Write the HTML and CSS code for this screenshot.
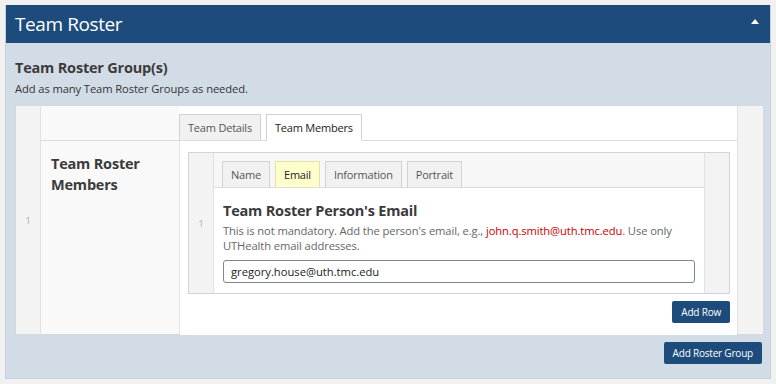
FILE: index.html
```html
<!DOCTYPE html>
<html lang="en">

<head>
    <meta charset="UTF-8">
    <meta name="viewport" content="width=device-width, initial-scale=1.0">
    <title>Team Roster</title>
    <link rel="stylesheet" href="styles.css">
</head>

<body>
    <div class="panel">
        <div class="panel-header">
            <h2>Team Roster</h2>
            <span class="toggle"></span>
        </div>
        <div class="panel-body">
            <h3 class="field-title">Team Roster Group(s)</h3>
            <p class="field-desc">Add as many Team Roster Groups as needed.</p>

            <div class="repeater">
                <div class="row-num">1</div>
                <div class="row-main">
                    <div class="cell-head"></div>
                    <div class="tabs outer-tabs">
                        <span class="tab">Team Details</span>
                        <span class="tab active">Team Members</span>
                    </div>
                    <div class="cell-label">Team Roster Members</div>
                    <div class="cell-content">
                        <div class="inner-repeater">
                            <div class="row-num inner-num">1</div>
                            <div class="inner-main">
                                <div class="tabs inner-tabs">
                                    <span class="tab">Name</span>
                                    <span class="tab highlight">Email</span>
                                    <span class="tab">Information</span>
                                    <span class="tab">Portrait</span>
                                </div>
                                <div class="inner-field">
                                    <h3 class="field-title">Team Roster Person's Email</h3>
                                    <p class="field-desc">This is not mandatory. Add the person's email, e.g., <span class="example">john.q.smith@uth.tmc.edu</span>. Use only UTHealth email addresses.</p>
                                    <input class="text-input" type="text" value="gregory.house@uth.tmc.edu">
                                </div>
                            </div>
                            <div class="row-end inner-end"></div>
                        </div>
                        <div class="actions">
                            <button class="btn">Add Row</button>
                        </div>
                    </div>
                </div>
                <div class="row-end"></div>
            </div>

            <div class="actions group-actions">
                <button class="btn">Add Roster Group</button>
            </div>
        </div>
    </div>
</body>

</html>
```

FILE: styles.css
```css
body {
    font-family: "Open Sans", "Noto Sans", sans-serif;
    margin: 0;
    padding: 5px;
    background-color: #f1f1f1;
    color: #333;
}

.panel {
    border: 1px solid #c8d1da;
    border-top: none;
}

.panel-header {
    height: 38px;
    background-color: #1d4c7c;
    display: flex;
    justify-content: space-between;
    align-items: center;
    padding: 0 11px 0 9px;
}

.panel-header h2 {
    margin: 0;
    color: white;
    font-size: 19px;
    font-weight: 400;
    letter-spacing: -0.4px;
}

.toggle {
    width: 0;
    height: 0;
    border-left: 4px solid transparent;
    border-right: 4px solid transparent;
    border-bottom: 5px solid white;
    margin-bottom: 6px;
}

.panel-body {
    background-color: #d2dce6;
    padding: 15px 6px 14px 9px;
}

.field-title {
    margin: 0;
    font-size: 14.5px;
    font-weight: 700;
    color: #3b3b3b;
    letter-spacing: -0.2px;
}

.field-desc {
    margin: 4px 0 0;
    font-size: 11.2px;
    line-height: 15px;
    color: #333;
    letter-spacing: -0.1px;
}

.repeater {
    display: flex;
    margin-top: 9px;
    height: 230px;
    box-sizing: border-box;
    border: 1px solid #d4d9de;
    background-color: #f9f9f9;
}

.row-num {
    width: 24px;
    flex-shrink: 0;
    background-color: #f3f3f3;
    border-right: 1px solid #e1e1e1;
    display: flex;
    align-items: center;
    justify-content: center;
    font-size: 9px;
    color: #aaa;
}

.row-end {
    width: 25px;
    flex-shrink: 0;
    background-color: #f3f3f3;
    border-left: 1px solid #e1e1e1;
}

.row-main {
    flex: 1;
    display: grid;
    grid-template-columns: 139px 1fr;
    grid-template-rows: 35px 1fr;
}

.cell-head {
    border-bottom: 1px solid #dcdcdc;
    border-right: 1px solid #e4e4e4;
}

.cell-label {
    border-right: 1px solid #e4e4e4;
    padding: 12px 10px;
    font-size: 14.5px;
    font-weight: 700;
    line-height: 21px;
    color: #3b3b3b;
    letter-spacing: -0.2px;
}

.tabs {
    display: flex;
    align-items: flex-end;
    border-bottom: 1px solid #dcdcdc;
}

.tab {
    font-size: 11px;
    color: #555;
    background-color: #f1f1f1;
    border: 1px solid #d2d2d2;
    margin-right: 5px;
    padding: 0 8px;
    line-height: 25px;
    margin-bottom: -1px;
    border-bottom: 1px solid #dcdcdc;
    letter-spacing: -0.2px;
}

.outer-tabs {
    background-color: #fff;
    margin-left: -1px;
}

.outer-tabs .tab.active {
    background-color: #fff;
    color: #222;
    border-bottom-color: #fff;
}

.cell-content {
    background-color: #fff;
    padding: 11px 7px 12px 8px;
    display: flex;
    flex-direction: column;
}

.inner-repeater {
    display: flex;
    height: 142px;
    box-sizing: border-box;
    border: 1px solid #d0d4d8;
}

.inner-num {
    width: 24px;
}

.inner-end {
    width: 24px;
}

.inner-main {
    flex: 1;
    display: flex;
    flex-direction: column;
    background-color: #fff;
}

.inner-tabs {
    background-color: #f7f7f7;
    height: 35px;
    padding-left: 8px;
    box-sizing: border-box;
}

.inner-tabs .tab.highlight {
    background-color: #ffffcc;
    border-color: #e3e3a6;
    color: #222;
    border-bottom-color: #dcdcdc;
}

.inner-field {
    padding: 13px 9px 0 9px;
}

.inner-field .field-desc {
    color: #666;
    margin-top: 3px;
}

.example {
    color: #cc0000;
}

.text-input {
    display: block;
    width: 100%;
    box-sizing: border-box;
    margin-top: 7px;
    height: 23px;
    border: 1px solid #7c8792;
    border-radius: 3px;
    padding: 0 7px;
    font-family: inherit;
    font-size: 11.2px;
    color: #222;
}

.actions {
    display: flex;
    justify-content: flex-end;
    margin-top: 7px;
}

.btn {
    background-color: #1d4c7c;
    color: white;
    border: none;
    border-radius: 2px;
    font-family: inherit;
    font-size: 10px;
    letter-spacing: -0.2px;
    padding: 0 9px;
    height: 22px;
    cursor: pointer;
}

.group-actions {
    margin-right: 2px;
}
```
